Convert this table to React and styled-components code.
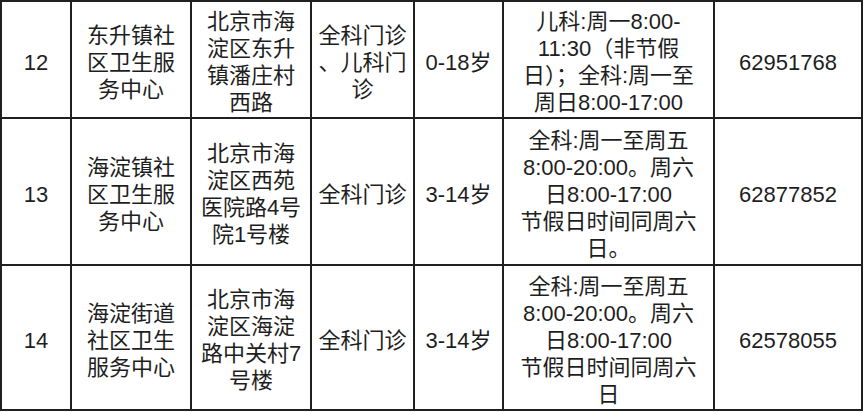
import styled, { createGlobalStyle } from "styled-components";

const GlobalStyle = createGlobalStyle`
  html, body {
    margin: 0;
    padding: 0;
    background: #ffffff;
  }
  body {
    font-family: "Liberation Sans", "Noto Sans CJK SC", sans-serif;
  }
`;

const Table = styled.div`
  display: grid;
  grid-template-columns: 68px 118px 118px 101px 87px 209px 146px;
  grid-template-rows: 115px 145px 143px;
  gap: 2px;
  padding: 2px;
  width: max-content;
  background: #202020;
`;

const Cell = styled.div`
  display: flex;
  align-items: center;
  justify-content: center;
  background: #ffffff;
  padding: 5px 4px 0;
  color: #1e1e1e;
  font-size: 22px;
  line-height: 27px;
  text-align: center;
  white-space: pre;
`;

const rows = [
  {
    no: "12",
    name: "东升镇社\n区卫生服\n务中心",
    address: "北京市海\n淀区东升\n镇潘庄村\n西路",
    dept: "全科门诊\n、儿科门\n诊",
    age: "0-18岁",
    hours: "儿科:周一8:00-\n11:30（非节假\n日）；全科:周一至\n周日8:00-17:00",
    phone: "62951768",
  },
  {
    no: "13",
    name: "海淀镇社\n区卫生服\n务中心",
    address: "北京市海\n淀区西苑\n医院路4号\n院1号楼",
    dept: "全科门诊",
    age: "3-14岁",
    hours: "全科:周一至周五\n8:00-20:00。周六\n日8:00-17:00\n节假日时间同周六\n日。",
    phone: "62877852",
  },
  {
    no: "14",
    name: "海淀街道\n社区卫生\n服务中心",
    address: "北京市海\n淀区海淀\n路中关村7\n号楼",
    dept: "全科门诊",
    age: "3-14岁",
    hours: "全科:周一至周五\n8:00-20:00。周六\n日8:00-17:00\n节假日时间同周六\n日",
    phone: "62578055",
  },
];

const fields = ["no", "name", "address", "dept", "age", "hours", "phone"];

const App = () => {
  return (
    <>
      <GlobalStyle />
      <Table>
        {rows.map((row) =>
          fields.map((f) => <Cell key={row.no + f}>{row[f]}</Cell>)
        )}
      </Table>
    </>
  );
};

export default App;
